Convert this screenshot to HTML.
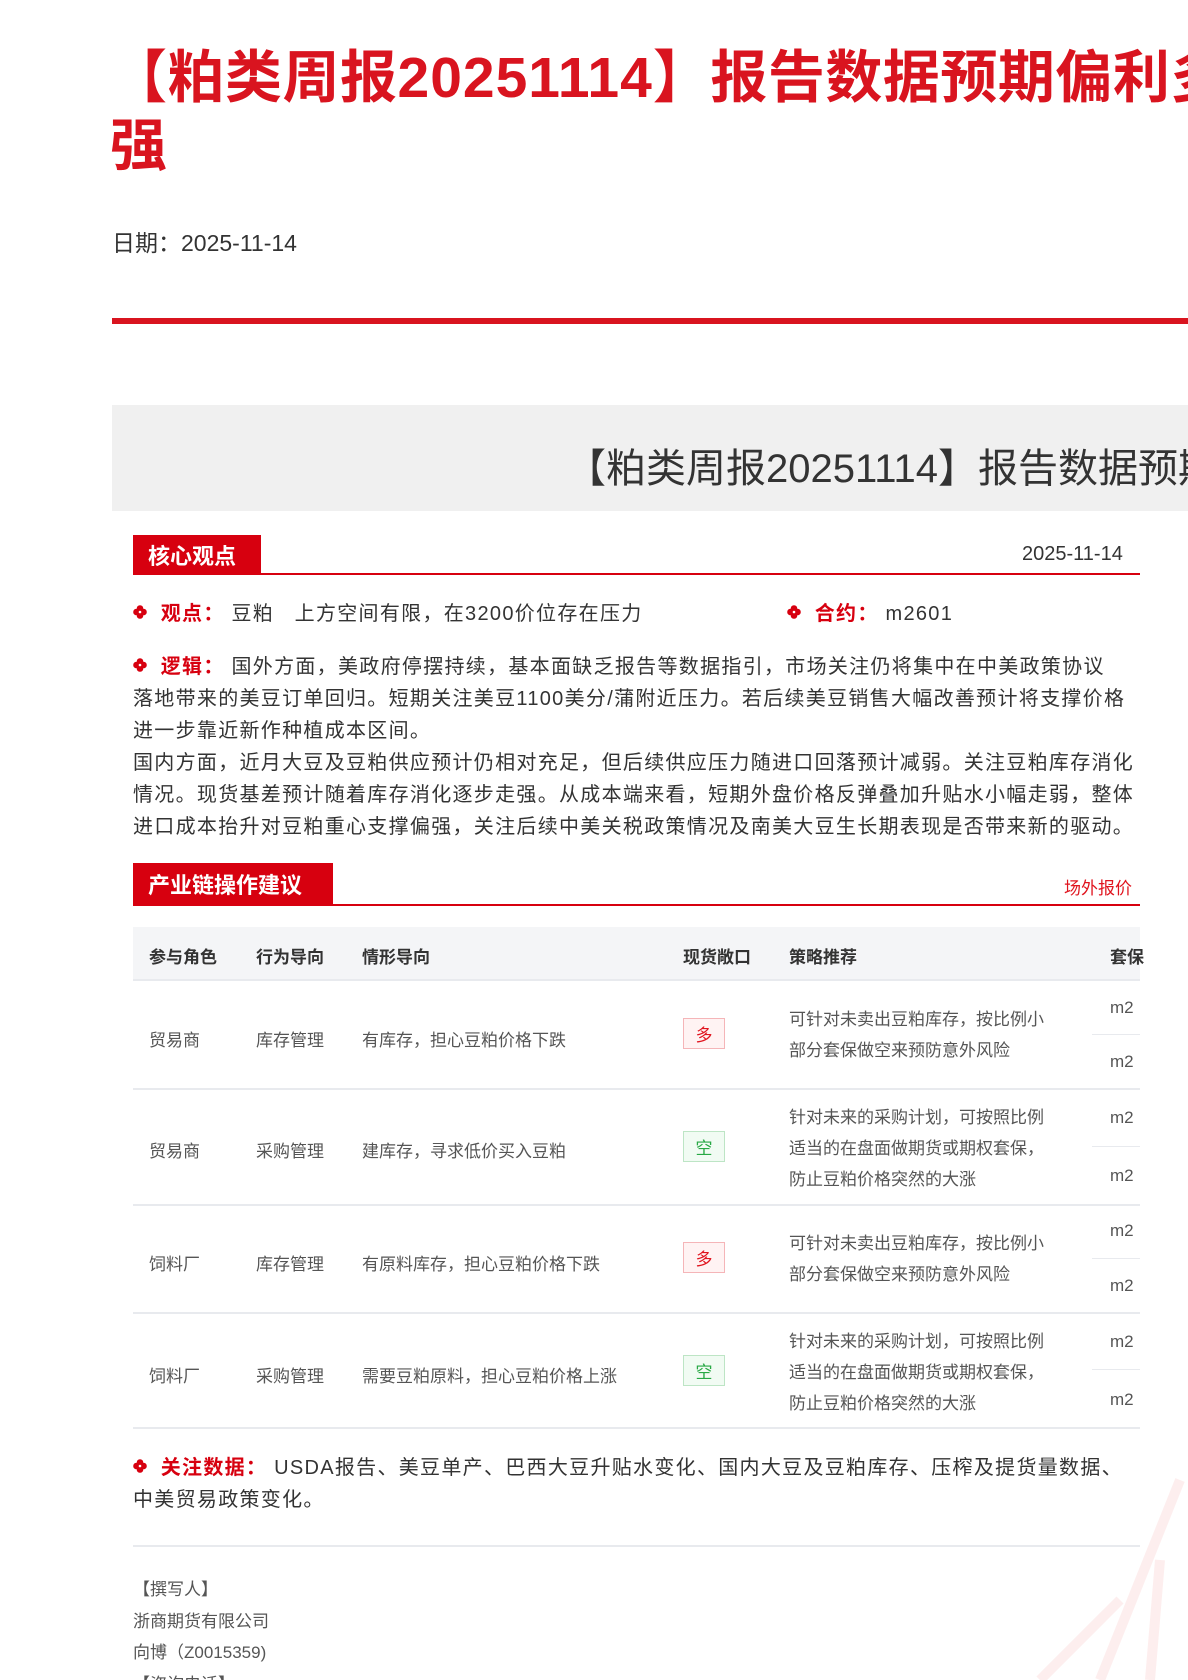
<!DOCTYPE html>
<html><head><meta charset="utf-8"><style>
*{margin:0;padding:0;box-sizing:border-box}
html,body{width:1188px;height:1680px;overflow:hidden;background:#fff}
body{position:relative;font-family:"Liberation Sans","Noto Sans CJK SC",sans-serif;color:#333}
.a{position:absolute;white-space:nowrap}
.t{font-size:57px;font-weight:bold;color:#d9141f;line-height:68px}
.hd{background:#d7000f;color:#fff;font-weight:bold;font-size:22px;display:flex;align-items:center;padding-left:15px}
.r{color:#d7000f;font-weight:bold}
.bul{display:inline-block;width:14px;height:14px;vertical-align:1px}
.p{font-size:20px;letter-spacing:1.3px;color:#333;line-height:32px}
.th{font-size:17px;font-weight:bold;color:#333}
.td{font-size:17px;color:#555}
.bd{width:42px;height:31px;font-size:17px;display:flex;align-items:center;justify-content:center}
.red{border:1px solid #f5b5b8;background:#fff3f3;color:#e0141e}
.grn{border:1px solid #bde5c5;background:#f1fbf3;color:#27a844}
.hl{position:absolute;height:2px;background:#e8eaee}
</style></head><body>
<svg width="0" height="0" style="position:absolute"><defs><g id="fl"><circle cx="7" cy="3.5" r="3.3" fill="#d7000f"/><circle cx="7" cy="10.5" r="3.3" fill="#d7000f"/><circle cx="3.5" cy="7" r="3.3" fill="#d7000f"/><circle cx="10.5" cy="7" r="3.3" fill="#d7000f"/><circle cx="7" cy="7" r="1.3" fill="#fff"/></g></defs></svg>
<div class="a t" style="left:110px;top:44px;letter-spacing:0.5px">【粕类周报<span style="letter-spacing:1px">20251114</span>】报告数据预期偏利多强</div>
<div class="a t" style="left:110px;top:112px">强</div>
<div class="a" style="left:112px;top:224px;font-size:23px;color:#333">日期：2025-11-14</div>
<div class="a" style="left:112px;top:318px;width:1076px;height:6px;background:#d9141f"></div>
<div class="a" style="left:112px;top:405px;width:1076px;height:106px;background:#f0f0f0"></div>
<div class="a" style="left:566px;top:436px;font-size:40px;color:#333">【粕类周报20251114】报告数据预期偏利多</div>

<div class="a hd" style="left:133px;top:535px;width:128px;height:39px">核心观点</div>
<div class="a" style="left:133px;top:573px;width:1007px;height:2px;background:#d7000f"></div>
<div class="a" style="left:1022px;top:543px;font-size:20px;color:#333">2025-11-14</div>

<div class="a p" style="left:133px;top:598px"><svg class="bul"><use href="#fl"/></svg>&nbsp;&nbsp;<span class="r">观点：</span>&nbsp;豆粕&nbsp;&nbsp;&nbsp;上方空间有限，在3200价位存在压力</div>
<div class="a p" style="left:787px;top:598px"><svg class="bul"><use href="#fl"/></svg>&nbsp;&nbsp;<span class="r">合约：</span>&nbsp;m2601</div>
<div class="a p" style="left:133px;top:651px"><svg class="bul"><use href="#fl"/></svg>&nbsp;&nbsp;<span class="r">逻辑：</span>&nbsp;国外方面，美政府停摆持续，基本面缺乏报告等数据指引，市场关注仍将集中在中美政策协议<br>落地带来的美豆订单回归。短期关注美豆1100美分/蒲附近压力。若后续美豆销售大幅改善预计将支撑价格<br>进一步靠近新作种植成本区间。<br>国内方面，近月大豆及豆粕供应预计仍相对充足，但后续供应压力随进口回落预计减弱。关注豆粕库存消化<br>情况。现货基差预计随着库存消化逐步走强。从成本端来看，短期外盘价格反弹叠加升贴水小幅走弱，整体<br>进口成本抬升对豆粕重心支撑偏强，关注后续中美关税政策情况及南美大豆生长期表现是否带来新的驱动。</div>

<div class="a hd" style="left:133px;top:863px;width:200px;height:42px">产业链操作建议</div>
<div class="a" style="left:133px;top:904px;width:1007px;height:2px;background:#d7000f"></div>
<div class="a" style="left:1064px;top:874px;font-size:17px;color:#e0141e">场外报价</div>

<div class="a" style="left:133px;top:927px;width:1007px;height:53px;background:#f4f5f7"></div>
<div class="a th" style="left:149px;top:943px">参与角色</div>
<div class="a th" style="left:256px;top:943px">行为导向</div>
<div class="a th" style="left:362px;top:943px">情形导向</div>
<div class="a th" style="left:683px;top:943px">现货敞口</div>
<div class="a th" style="left:789px;top:943px">策略推荐</div>
<div class="a th" style="left:1110px;top:943px">套保</div>
<div class="hl" style="left:133px;top:979px;width:1007px"></div>

<div class="a td" style="left:149px;top:1026px">贸易商</div>
<div class="a td" style="left:256px;top:1026px">库存管理</div>
<div class="a td" style="left:362px;top:1026px">有库存，担心豆粕价格下跌</div>
<div class="a bd red" style="left:683px;top:1018px">多</div>
<div class="a td" style="left:789px;top:1004px;line-height:31px">可针对未卖出豆粕库存，按比例小<br>部分套保做空来预防意外风险</div>
<div class="a td" style="left:1110px;top:998px">m2</div>
<div class="hl" style="left:1092px;top:1034px;width:48px;height:1px"></div>
<div class="a td" style="left:1110px;top:1052px">m2</div>
<div class="hl" style="left:133px;top:1088px;width:1007px"></div>

<div class="a td" style="left:149px;top:1137px">贸易商</div>
<div class="a td" style="left:256px;top:1137px">采购管理</div>
<div class="a td" style="left:362px;top:1137px">建库存，寻求低价买入豆粕</div>
<div class="a bd grn" style="left:683px;top:1131px">空</div>
<div class="a td" style="left:789px;top:1102px;line-height:31px">针对未来的采购计划，可按照比例<br>适当的在盘面做期货或期权套保，<br>防止豆粕价格突然的大涨</div>
<div class="a td" style="left:1110px;top:1108px">m2</div>
<div class="hl" style="left:1092px;top:1146px;width:48px;height:1px"></div>
<div class="a td" style="left:1110px;top:1166px">m2</div>
<div class="hl" style="left:133px;top:1204px;width:1007px"></div>

<div class="a td" style="left:149px;top:1250px">饲料厂</div>
<div class="a td" style="left:256px;top:1250px">库存管理</div>
<div class="a td" style="left:362px;top:1250px">有原料库存，担心豆粕价格下跌</div>
<div class="a bd red" style="left:683px;top:1242px">多</div>
<div class="a td" style="left:789px;top:1228px;line-height:31px">可针对未卖出豆粕库存，按比例小<br>部分套保做空来预防意外风险</div>
<div class="a td" style="left:1110px;top:1221px">m2</div>
<div class="hl" style="left:1092px;top:1258px;width:48px;height:1px"></div>
<div class="a td" style="left:1110px;top:1276px">m2</div>
<div class="hl" style="left:133px;top:1312px;width:1007px"></div>

<div class="a td" style="left:149px;top:1362px">饲料厂</div>
<div class="a td" style="left:256px;top:1362px">采购管理</div>
<div class="a td" style="left:362px;top:1362px">需要豆粕原料，担心豆粕价格上涨</div>
<div class="a bd grn" style="left:683px;top:1355px">空</div>
<div class="a td" style="left:789px;top:1326px;line-height:31px">针对未来的采购计划，可按照比例<br>适当的在盘面做期货或期权套保，<br>防止豆粕价格突然的大涨</div>
<div class="a td" style="left:1110px;top:1332px">m2</div>
<div class="hl" style="left:1092px;top:1369px;width:48px;height:1px"></div>
<div class="a td" style="left:1110px;top:1390px">m2</div>
<div class="hl" style="left:133px;top:1427px;width:1007px"></div>

<div class="a p" style="left:133px;top:1452px"><svg class="bul"><use href="#fl"/></svg>&nbsp;&nbsp;<span class="r">关注数据：</span>&nbsp;USDA报告、美豆单产、巴西大豆升贴水变化、国内大豆及豆粕库存、压榨及提货量数据、<br>中美贸易政策变化。</div>
<div class="hl" style="left:133px;top:1545px;width:1007px"></div>
<div class="a" style="left:133px;top:1574px;font-size:17px;color:#555;line-height:31.5px">【撰写人】<br>浙商期货有限公司<br>向博（Z0015359)<br>【咨询电话】</div>
<svg class="a" style="left:980px;top:1440px" width="208" height="240"><g stroke="#fdeeee" stroke-width="10" fill="none"><path d="M200 40 L120 240"/><path d="M140 160 L60 240"/><path d="M180 120 L170 240"/></g></svg>
</body></html>
